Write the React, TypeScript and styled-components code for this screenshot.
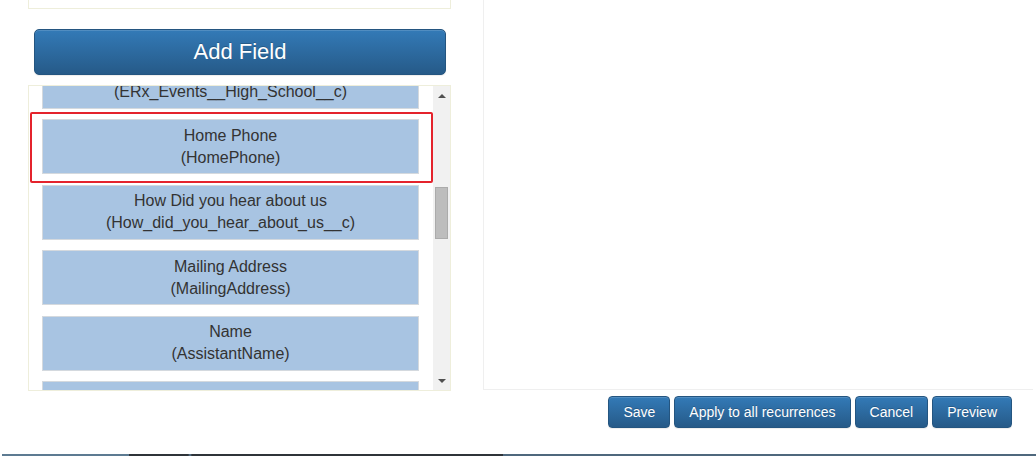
import React from "react";
import styled, { createGlobalStyle } from "styled-components";

const GlobalStyle = createGlobalStyle`
  html, body {
    margin: 0;
    padding: 0;
    background: #ffffff;
    font-family: "Liberation Sans", Arial, sans-serif;
    overflow: hidden;
  }
`;

const Page = styled.div`
  display: flex;
  align-items: flex-start;
  gap: 32px;
  padding-left: 28px;
  width: 1036px;
  box-sizing: border-box;
`;

const LeftColumn = styled.div`
  display: flex;
  flex-direction: column;
  width: 423px;
  flex: 0 0 auto;
`;

const TopBox = styled.div`
  height: 9px;
  box-sizing: border-box;
  border: 1px solid #eeeedb;
  border-top: none;
  background: #ffffff;
`;

const blueButton = `
  color: #ffffff;
  font-family: "Liberation Sans", Arial, sans-serif;
  text-shadow: 0 -1px 0 rgba(0, 0, 0, 0.2);
  background-image: linear-gradient(to bottom, #337ab7 0, #265a88 100%);
  border: 1px solid #245580;
  box-shadow: inset 0 1px 0 rgba(255, 255, 255, 0.15), 0 1px 1px rgba(0, 0, 0, 0.075);
  cursor: pointer;
`;

const AddFieldButton = styled.button`
  ${blueButton}
  margin: 20px 5px 0 6px;
  height: 46px;
  border-radius: 5px;
  font-size: 22px;
  line-height: 26px;
  padding: 0;
`;

const FieldList = styled.div`
  display: flex;
  margin-top: 10px;
  height: 306px;
  box-sizing: border-box;
  border: 1px solid #eeeedb;
  background: #ffffff;
`;

const ListViewport = styled.div`
  flex: 1;
  overflow: hidden;
  padding: 0 14px 0 13px;
`;

const ListTrack = styled.div`
  display: flex;
  flex-direction: column;
  gap: 10.5px;
  margin-top: -32.5px;
`;

const FieldItem = styled.div`
  display: flex;
  flex-direction: column;
  align-items: center;
  justify-content: center;
  height: 55px;
  box-sizing: border-box;
  border: 1px solid #d4d9de;
  background: #a8c4e2;
  color: #333333;
  font-size: 16px;
  line-height: 22px;
  text-align: center;
  white-space: nowrap;
`;

const Highlight = styled.div`
  margin: -7px -14px -9px -12px;
  padding: 5px 12px 7px 10px;
  border: 2px solid #e4232c;
  border-radius: 2px;
`;

const ScrollTrack = styled.div`
  display: flex;
  flex-direction: column;
  width: 17px;
  flex: 0 0 auto;
  background: #f1f1f1;
`;

const ScrollArrow = styled.div<{ $dir: "up" | "down" }>`
  height: 17px;
  display: flex;
  align-items: center;
  justify-content: center;
  &::after {
    content: "";
    width: 0;
    height: 0;
    border-left: 4px solid transparent;
    border-right: 4px solid transparent;
    ${(p) =>
      p.$dir === "up"
        ? "border-bottom: 4px solid #505050; margin-top: 2px;"
        : "border-top: 4px solid #505050; margin-bottom: 2px;"}
  }
`;

const ScrollThumb = styled.div<{ $offset: number; $size: number }>`
  margin: ${(p) => p.$offset}px 2px 0 2px;
  height: ${(p) => p.$size}px;
  box-sizing: border-box;
  background: #bdbdbd;
  border: 1px solid #ababab;
`;

const Spacer = styled.div`
  flex: 1;
`;

const RightColumn = styled.div`
  display: flex;
  flex-direction: column;
  width: 550px;
  flex: 0 0 auto;
`;

const PreviewPanel = styled.div`
  height: 390px;
  box-sizing: border-box;
  border: 1px solid #efefef;
  border-top: none;
  border-right: none;
  background: #ffffff;
`;

const ButtonBar = styled.div`
  display: flex;
  justify-content: flex-end;
  gap: 4px;
  margin-top: 6px;
  padding-right: 21px;
`;

const ActionButton = styled.button`
  ${blueButton}
  height: 32px;
  padding: 0 14px;
  border-radius: 4px;
  font-size: 14px;
  line-height: 18px;
  white-space: nowrap;
`;

const FooterRule = styled.div`
  margin: 26px 0 0 2px;
  height: 2px;
  background: linear-gradient(
    to right,
    #5d7b92 0,
    #5d7b92 127px,
    #2f3439 127px,
    #2f3439 186px,
    #5b7a93 188px,
    #2f3439 190px,
    #2f3439 501px,
    #4f687d 501px,
    #4f687d 100%
  );
`;

type Field = { label: string; api: string; selected?: boolean };

const fields: Field[] = [
  { label: "High School", api: "ERx_Events__High_School__c" },
  { label: "Home Phone", api: "HomePhone", selected: true },
  { label: "How Did you hear about us", api: "How_did_you_hear_about_us__c" },
  { label: "Mailing Address", api: "MailingAddress" },
  { label: "Name", api: "AssistantName" },
  { label: "Phone", api: "Phone" },
];

const FieldCard = ({ field }: { field: Field }) => (
  <FieldItem>
    <span>{field.label}</span>
    <span>({field.api})</span>
  </FieldItem>
);

export default function App() {
  return (
    <>
      <GlobalStyle />
      <Page>
        <LeftColumn>
          <TopBox />
          <AddFieldButton>Add Field</AddFieldButton>
          <FieldList>
            <ListViewport>
              <ListTrack>
                {fields.map((f) =>
                  f.selected ? (
                    <Highlight key={f.api}>
                      <FieldCard field={f} />
                    </Highlight>
                  ) : (
                    <FieldCard key={f.api} field={f} />
                  )
                )}
              </ListTrack>
            </ListViewport>
            <ScrollTrack>
              <ScrollArrow $dir="up" />
              <ScrollThumb $offset={84} $size={52} />
              <Spacer />
              <ScrollArrow $dir="down" />
            </ScrollTrack>
          </FieldList>
        </LeftColumn>
        <RightColumn>
          <PreviewPanel />
          <ButtonBar>
            <ActionButton>Save</ActionButton>
            <ActionButton>Apply to all recurrences</ActionButton>
            <ActionButton>Cancel</ActionButton>
            <ActionButton>Preview</ActionButton>
          </ButtonBar>
        </RightColumn>
      </Page>
      <FooterRule />
    </>
  );
}
